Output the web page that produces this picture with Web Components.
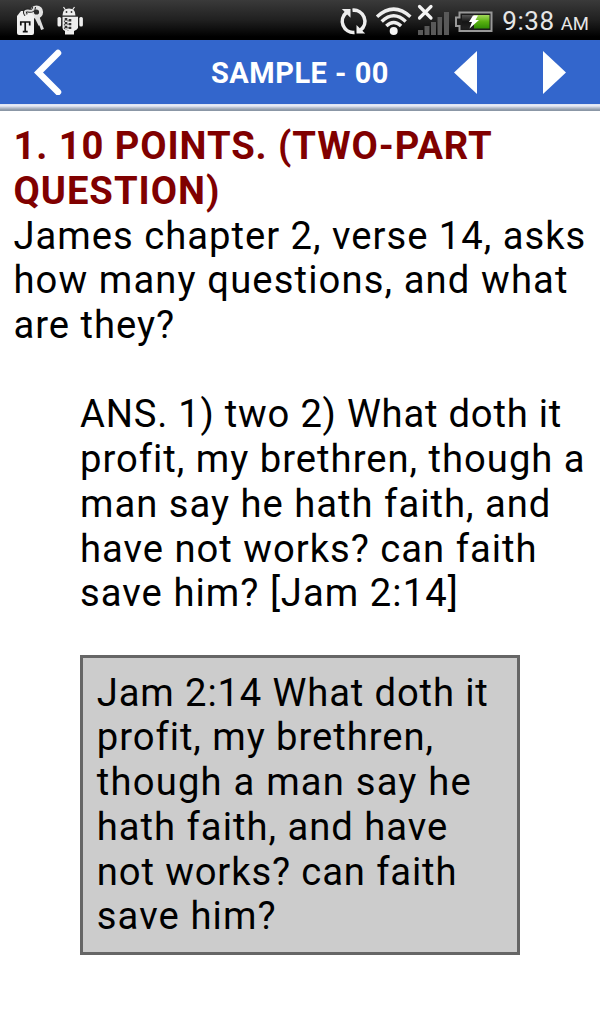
<!DOCTYPE html>
<html lang="en">
<head>
<meta charset="utf-8">
<meta name="viewport" content="width=device-width, initial-scale=1">
<title>Sample - 00</title>
<style>
  html, body {
    margin: 0;
    height: 100%;
    background: #fff;
    font-family: Roboto, "Liberation Sans", sans-serif;
  }
</style>
</head>
<body>
<quiz-screen>
  <status-bar slot="status" time="9:38" period="AM"></status-bar>
  <nav-bar slot="nav">SAMPLE - 00</nav-bar>
  <quiz-question>
    <text-line slot="heading" spacing="0.92">1. 10 POINTS. (TWO-PART</text-line>
    <text-line slot="heading">QUESTION)</text-line>
    <text-line>James chapter 2, verse 14, asks</text-line>
    <text-line spacing="1.12">how many questions, and what</text-line>
    <text-line>are they?</text-line>
  </quiz-question>
  <quiz-answer>
    <text-line spacing="0.78">ANS. 1) two 2) What doth it</text-line>
    <text-line>profit, my brethren, though a</text-line>
    <text-line>man say he hath faith, and</text-line>
    <text-line>have not works? can faith</text-line>
    <text-line spacing="1.05">save him? [Jam 2:14]</text-line>
  </quiz-answer>
  <verse-box>
    <text-line spacing="0.87">Jam 2:14 What doth it</text-line>
    <text-line spacing="0.95">profit, my brethren,</text-line>
    <text-line spacing="1.2">though a man say he</text-line>
    <text-line>hath faith, and have</text-line>
    <text-line spacing="0.88">not works? can faith</text-line>
    <text-line spacing="1.1">save him?</text-line>
  </verse-box>
</quiz-screen>

<script>
class StatusBar extends HTMLElement {
  constructor() {
    super();
    this.attachShadow({ mode: 'open' });
  }

  connectedCallback() {
    this.render();
  }

  render() {
    this.shadowRoot.innerHTML = `
      <style>
        :host {
          display: flex;
          align-items: center;
          height: 40px;
          box-sizing: border-box;
          padding: 0 11px 0 16px;
          background: linear-gradient(#3a3a3a, #202020 50%, #000 92%);
          color: #e6e6e6;
        }

        svg {
          display: block;
          flex: none;
        }

        .key { margin-right: 12px; }
        .sync { margin-left: auto; margin-right: 7px; }
        .wifi { margin-right: 5px; }
        .signal { margin-right: 5px; }
        .battery { margin-right: 9px; }

        .clock {
          display: flex;
          align-items: baseline;
          gap: 6px;
          line-height: 40px;
          font-size: 26px;
          letter-spacing: 0.6px;
          padding-top: 4px;
        }

        .period {
          font-size: 18.5px;
          letter-spacing: 0;
        }
      </style>
      <svg class="key" width="29" height="36" viewBox="16 2 29 36">
        <circle cx="36.500" cy="12" r="4.600" fill="none" stroke="#e2e2e2" stroke-width="4"/>
        <path d="M37.500 16l5 13.500M36 17l4 8" stroke="#ddd" stroke-width="3" fill="none"/>
        <path d="M21 11h9l4 5v17q0 2-2 2H19q-2 0-2-2V16z" fill="#f0f0f0"/>
        <path d="M26 15q-3-5 2-4.500q6 1.500 6-3.500" stroke="#222" stroke-width="4" fill="none"/>
        <path d="M26 15q-3-5 2-4.500q6 1.500 6-3.500" stroke="#ddd" stroke-width="2" fill="none"/>
        <path d="M20.800 25.500v-3.500h8.900v3.500M25.200 22v10M22.800 31.700h4.900" stroke="#111" stroke-width="1.700" fill="none"/>
      </svg>
      <svg width="26" height="36" viewBox="57 2 26 36">
        <path d="M65.500 10L63.500 7M72.500 10L74.500 7" stroke="#eee" stroke-width="1.200" fill="none"/>
        <path d="M62.500 15.500q0-7 6.500-7t6.500 7z" fill="#eee"/>
        <circle cx="66.500" cy="12" r=".9" fill="#333"/>
        <circle cx="71.500" cy="12" r=".9" fill="#333"/>
        <path d="M62.500 16.800h15.500V28q-1 2-4 3v3.500h-9V31q-2.500-1-2.500-3z" fill="#eee"/>
        <rect x="57.500" y="17" width="3.600" height="9.500" rx="1.500" fill="#eee"/>
        <rect x="79.300" y="17" width="3.600" height="9.500" rx="1.500" fill="#eee"/>
        <path d="M66 18v12M70 19v10" stroke="#333" stroke-width="2.600" stroke-dasharray="2.400 1.500" fill="none"/>
        <path d="M64.500 20.500v9M68 20v11" stroke="#555" stroke-width="1.200" stroke-dasharray="1.500 2" fill="none"/>
      </svg>
      <svg class="sync" width="29" height="36" viewBox="340 2 29 36">
        <g fill="none" stroke="#eee" stroke-width="3.600">
          <path d="M355.500 32.400A11.200 11.200 0 0 1 347.500 12.500"/>
          <path d="M353.500 10.200A11.200 11.200 0 0 1 361.500 30.200"/>
        </g>
        <path d="M342.800 9h8.700v8.700z" fill="#eee"/>
        <path d="M366.200 33.600H357.500v-8.700z" fill="#eee"/>
      </svg>
      <svg class="wifi" width="37" height="36" viewBox="376 2 37 36">
        <g fill="none" stroke="#eee" stroke-width="3.400">
          <path d="M378 16.800Q394.700 1.500 411.400 16.800"/>
          <path d="M382.700 21.500Q394.700 10 406.700 21.500"/>
          <path d="M387.300 26Q394.700 19 402.100 26"/>
        </g>
        <circle cx="394.700" cy="31" r="4" fill="#f4f4f4"/>
      </svg>
      <svg class="signal" width="33" height="36" viewBox="418 2 33 36">
        <path d="M419 30h5v5h-5zM425.500 26h5v9h-5zM432 22h5v13h-5zM438.500 17h4.500v18h-4.500zM445 12h5v23h-5z" fill="#595959"/>
        <path d="M420.500 6.500l11.500 11.500M432 6.500L420.500 18" stroke="#f4f4f4" stroke-width="3.200" stroke-linecap="round" fill="none"/>
      </svg>
      <svg class="battery" width="38" height="36" viewBox="456 2 38 36">
        <defs>
          <linearGradient id="charge" x2="0" y2="1">
            <stop offset="0" stop-color="#a3d85a"/>
            <stop offset=".5" stop-color="#58b010"/>
            <stop offset="1" stop-color="#2f8b04"/>
          </linearGradient>
          <linearGradient id="empty" x2="0" y2="1">
            <stop offset="0" stop-color="#555"/>
            <stop offset=".5" stop-color="#151515"/>
            <stop offset="1" stop-color="#222"/>
          </linearGradient>
        </defs>
        <path d="M460.500 12.500h32v18.500h-32v-5h-3.500v-8.500h3.500z" fill="#1b1b1b" stroke="#999" stroke-width="2"/>
        <rect x="463" y="15" width="12" height="13.500" fill="url(#empty)"/>
        <rect x="475" y="15" width="15.500" height="13.500" fill="url(#charge)"/>
        <path d="M474 15.500h5l-2.500 4.500h3.500l-9.500 8.500 2.500-6.500h-3z" fill="#fff"/>
      </svg>
      <div class="clock">
        <span>${this.getAttribute('time')}</span>
        <span class="period">${this.getAttribute('period')}</span>
      </div>
    `;
  }
}

class NavBar extends HTMLElement {
  constructor() {
    super();
    this.attachShadow({ mode: 'open' });
    this.shadowRoot.innerHTML = `
      <style>
        :host {
          display: block;
          color: #fff;
        }

        .bar {
          display: grid;
          grid-template-columns: 200px 200px 200px;
          align-items: center;
          height: 64px;
          background: #3366cc;
        }

        .title {
          padding-top: 2px;
          text-align: center;
          font-size: 29px;
          font-weight: 700;
          letter-spacing: 0.5px;
          white-space: nowrap;
        }

        .steps {
          display: flex;
          justify-content: space-between;
          padding: 1px 34.500px 0 54px;
        }

        .edge {
          height: 7px;
          background: linear-gradient(#dfe5f4 0 1px, #e6e9f4 1px 2px, #c9cfdd 3px, #a9b2c1 4.500px, #8b97a6 6px, #8b97a6 7px);
        }

        svg {
          display: block;
        }

        .back {
          margin-left: 34px;
        }
      </style>
      <div class="bar">
        <svg class="back" width="28" height="46" viewBox="34 49 28 46">
          <path d="M58 53L38.500 72.500L58 92" fill="none" stroke="#fff" stroke-width="6.500" stroke-linecap="round"/>
        </svg>
        <div class="title"><slot></slot></div>
        <div class="steps">
          <svg width="23" height="43" viewBox="0 0 23 43"><path d="M23 0v43L0 21.500z" fill="#fff"/></svg>
          <svg width="23" height="43" viewBox="0 0 23 43"><path d="M0 0v43L23 21.500z" fill="#fff"/></svg>
        </div>
      </div>
      <div class="edge"></div>
    `;
  }
}

/* One line of running text, with its own tracking in px */
class TextLine extends HTMLElement {
  constructor() {
    super();
    this.attachShadow({ mode: 'open' });
  }

  connectedCallback() {
    const spacing = this.getAttribute('spacing') || '1';
    this.shadowRoot.innerHTML = `
      <style>
        :host {
          display: block;
          white-space: nowrap;
          letter-spacing: ${spacing}px;
        }
      </style>
      <slot></slot>
    `;
  }
}

class QuizQuestion extends HTMLElement {
  constructor() {
    super();
    this.attachShadow({ mode: 'open' });
    this.shadowRoot.innerHTML = `
      <style>
        :host {
          display: block;
        }

        .heading {
          color: #800000;
          font-weight: 700;
        }
      </style>
      <div class="heading"><slot name="heading"></slot></div>
      <div><slot></slot></div>
    `;
  }
}

class QuizAnswer extends HTMLElement {
  constructor() {
    super();
    this.attachShadow({ mode: 'open' });
    this.shadowRoot.innerHTML = `
      <style>
        :host {
          display: block;
          margin: 44.700px 0 0 66.600px;
        }
      </style>
      <slot></slot>
    `;
  }
}

class VerseBox extends HTMLElement {
  constructor() {
    super();
    this.attachShadow({ mode: 'open' });
    this.shadowRoot.innerHTML = `
      <style>
        :host {
          display: block;
          box-sizing: border-box;
          width: 440px;
          height: 300px;
          margin: 39px 0 0 66.600px;
          padding: 12.500px 13.800px;
          border: 3px solid #666;
          background: #ccc;
        }
      </style>
      <slot></slot>
    `;
  }
}

class QuizScreen extends HTMLElement {
  constructor() {
    super();
    this.attachShadow({ mode: 'open' });
    this.shadowRoot.innerHTML = `
      <style>
        :host {
          display: flex;
          flex-direction: column;
          width: 600px;
          height: 1024px;
          overflow: hidden;
          background: #fff;
        }

        main {
          flex: 1;
          padding: 13.100px 0 0 13.400px;
          color: #000;
          font-size: 38.200px;
          line-height: 44.740px;
        }
      </style>
      <slot name="status"></slot>
      <slot name="nav"></slot>
      <main><slot></slot></main>
    `;
  }
}

customElements.define('status-bar', StatusBar);
customElements.define('nav-bar', NavBar);
customElements.define('text-line', TextLine);
customElements.define('quiz-question', QuizQuestion);
customElements.define('quiz-answer', QuizAnswer);
customElements.define('verse-box', VerseBox);
customElements.define('quiz-screen', QuizScreen);
</script>
</body>
</html>
